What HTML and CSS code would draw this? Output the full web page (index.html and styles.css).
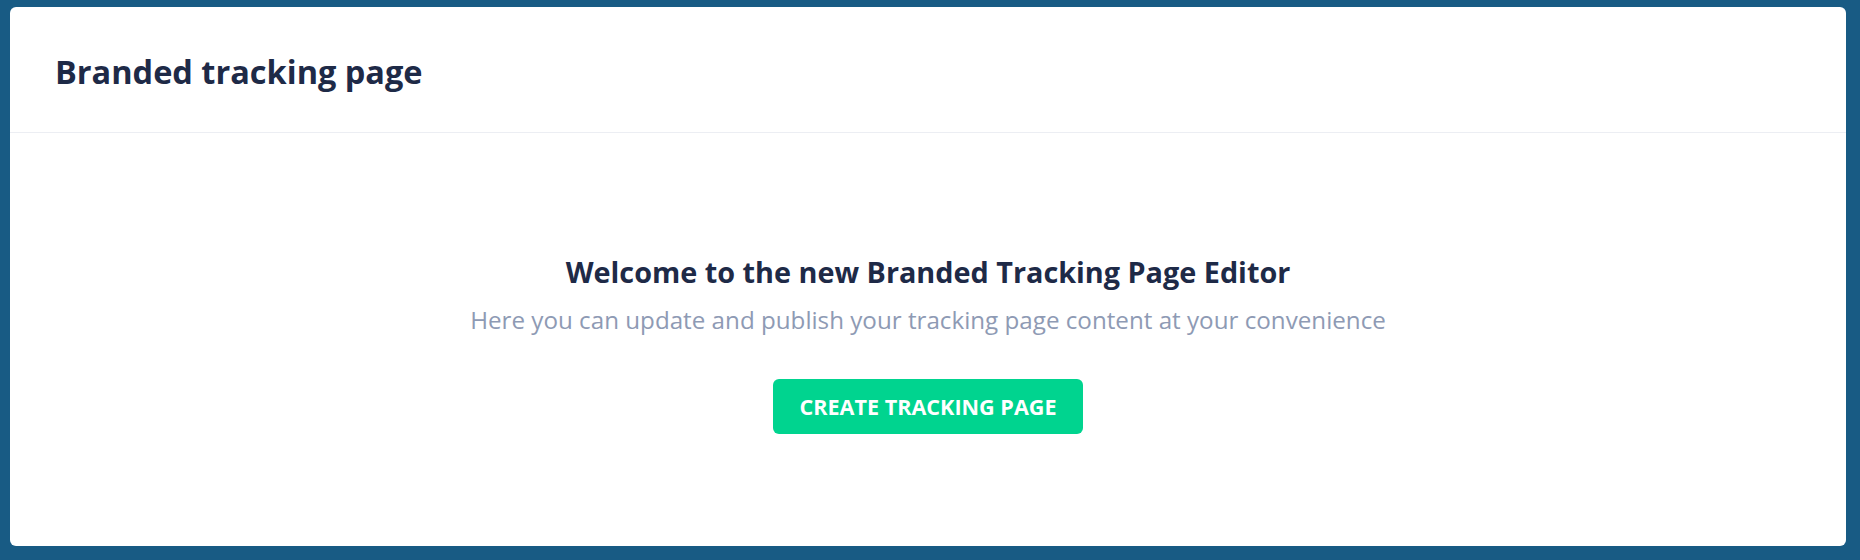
FILE: index.html
```html
<!DOCTYPE html>
<html lang="en">
  <head>
    <meta charset="UTF-8" />
    <meta name="viewport" content="width=device-width, initial-scale=1.0" />
    <title>Branded tracking page</title>
    <link rel="stylesheet" href="styles.css">
  </head>
  <body>
    <div class="card">
      <div class="card-header">
        <h1>Branded tracking page</h1>
      </div>

      <div class="card-body">
        <h2>Welcome to the new Branded Tracking Page Editor</h2>
        <p class="subtitle">
          Here you can update and publish your tracking page content at your convenience
        </p>
        <button class="btn">Create tracking page</button>
      </div>
    </div>
  </body>
</html>
```

FILE: styles.css
```css
body,
html {
  margin: 0;
  padding: 0;
  height: 100%;
  font-family: "Open Sans", Arial, sans-serif;
  background-color: #185b84;
}

body {
  padding: 7px 14px 14px 10px;
  box-sizing: border-box;
}

.card {
  background-color: #fff;
  border-radius: 6px;
  height: 100%;
  display: flex;
  flex-direction: column;
}

.card-header {
  height: 125px;
  border-bottom: 1px solid #eceef3;
  display: flex;
  align-items: center;
  padding: 0 45px;
}

h1 {
  margin: 0;
  font-size: 32.5px;
  font-weight: 700;
  color: #1e2a47;
  padding-top: 3px;
}

.card-body {
  flex: 1;
  display: flex;
  flex-direction: column;
  align-items: center;
  padding-top: 119px;
}

h2 {
  margin: 0;
  font-size: 28.8px;
  font-weight: 700;
  color: #1e2a47;
}

.subtitle {
  margin: 12px 0 0;
  font-size: 24.2px;
  color: #8e9ab4;
}

.btn {
  margin-top: 43px;
  width: 310px;
  height: 55px;
  border: none;
  border-radius: 6px;
  background-color: #00d48f;
  color: #fff;
  font-family: inherit;
  font-size: 21.6px;
  font-weight: 700;
  text-transform: uppercase;
  cursor: pointer;
}
```
